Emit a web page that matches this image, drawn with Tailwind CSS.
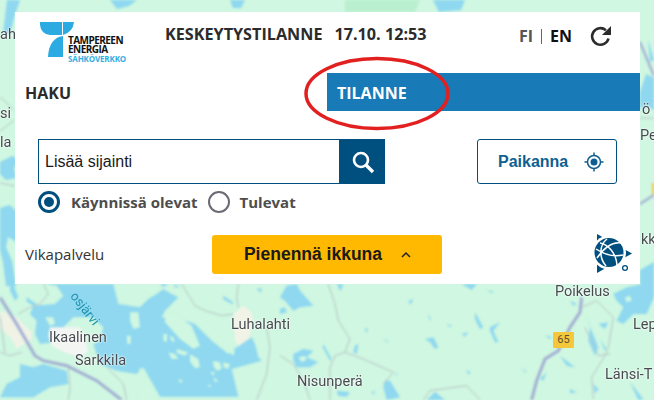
<!DOCTYPE html>
<html><head><meta charset="utf-8"><script src="https://cdn.jsdelivr.net/npm/@tailwindcss/browser@4"></script></head>
<body class="m-0">
<div class="relative w-[654px] h-[400px] overflow-hidden bg-[#cff7e1]">
<!-- map -->
<svg class="absolute inset-0 blur-[1px]" width="654" height="400" viewBox="0 0 654 400" fill="none">
<path d="M345 0h75l-5 12h-70z" fill="#b9efcf"/>
<g fill="#8fd8f0">
<path d="M7 0h13l-6 18-4 16H3z"/>
<path d="M110 0h27l-8 6-12 3z"/><path d="M230 0h15l-4 8h-8z"/><path d="M433 0h32l-4 10-22 2z"/>
<path d="M0 162l12-6 8 4-6 8 2 10-10 2-6-6z"/><path d="M0 208l10-3 8 8v30l-10-6-2 10 6 14 4 25H6l-3-24-3-12z"/>
<path d="M640 92l6-18 8 4v32l-8-4-2 6-4-6z"/><path d="M640 270l14-8v22h-14z"/><path d="M648 40l6 20-4 2z"/>
</g>
<rect x="652" y="183" width="2" height="14" fill="#f5c83c"/>
<path d="M640 42l14 34" stroke="#a9b4d4" stroke-width="2.500"/>
<path d="M640 204l14-9" stroke="#a9b4d4" stroke-width="2.500"/>
<path d="M640 118h14" stroke="#b8c4c6" stroke-width="1"/>
<path d="M0 97l6 5 7 8M0 131l8-6 6-5M0 183l15 3" stroke="#b8c4c6" stroke-width="1"/>

<g transform="translate(0 284) scale(.33333)">
  <path d="M0 80l50 20 45 45v20l-45 30-15-30-35-35z" fill="#f0f2e6"/>
  <path d="M700 90l30-25 25 20 5 25-15 60-25 20-15-20z" fill="#f1f3e6"/>
  <path fill="#8fd8f0" d="M135 0H340l15 60 35 5 30 5 25-25 25-15 20-15 25 15 20 10-40 40-10 20 70 10 30 10 50 50 50 40 10-10 60-40 10 20 10 40 10 10-90 25 20 83H480l-50-88-20 20-60-10-50-20-20-60-80-10-80 10-15-30 5-40-20-20 10-25 65-5 25-25-20-30z"/>
  <path fill="#8fd8f0" d="M60 240l40 10 30-10 70 20 5 40-55 10-50 30H0l20-40 40-20z"/>
  <path fill="#8fd8f0" d="M30 0h10l15 40-10 10-15-30zM80 40l30 20-5 8-25-15zM670 35l30 20-3 6-27-15zM770 15l14-3v14zM480 0h25l-15 10zM520 0l20 10h-15z"/>
  <g fill="#cff7e1">
    <path d="M220 100l60 0 30 30-10 40-40 20-60-10-50-30 40-20z"/>
    <path d="M390 85h25l5 45-20 5-10-25z"/>
    <path d="M495 95l30-5 50 35 25 60-20 10-40-30-45-50z"/>
    <path d="M490 150h12l-2 25-10-5zM510 155l10 5 5 15-12-5zM380 155l12 0v25h-10zM505 205l20 5 10 15-20 0zM530 195l35 10-10 10-25-8zM570 210l25 15 5 25-15 3-15-20zM640 230l20 5 5 20-15 5-10-15zM670 235l20 5-5 15-15-5zM630 265l15 0-5 10zM640 280l15 10-10 5zM535 285l15 5-10 8zM620 300l15 5-5 5z"/>
    <path d="M135 100l25 0 5 20-15 5zM60 110l30 15-5 10zM690 190l15 10-5 15-12-10z"/>
    <path d="M420 250l60 98h-60l-15-40z"/>
    <path d="M120 340l40-10 10 18h-50z"/>
  </g>
  <path d="M150 130h90l15 30 10 40-20 20-40-10-50-25-10-30z" fill="#f3f5f2"/>
  <g stroke="#b8c4c6" stroke-width="3" fill="none">
    <path d="M130 0l15 30-25 30-30 10-35 20M0 205l30 10 35-10M545 0l40 65 30 15 50 15 35-5M715 0l-5 40 5 30M0 95l15 110M205 250l5 60-5 38M320 250l50 50 10 48M800 130l10 60-10 80-30 78"/>
  </g>
  <path d="M0 40l50 80 55 95 25 15 70 15 90 45 75 58" stroke="#a3aed3" stroke-width="9" fill="none"/>
</g>

<g transform="translate(280 284) scale(.33333)">
  <g fill="#8fd8f0">
    <path d="M0 40L20 5l30-5 10 20 40 45-40 5-20 10-25-30zM0 75l15-5 5 15-20 5zM170 0h20l-8 22zM545 0h45l-15 18zM620 18l20 5-4 5zM385 52l15-8-8 18zM445 90l8 15-4 4zM585 85l25 45-10 5-15-30zM630 130l30-15-20 25 15 35-10 0-15-35zM435 165l25-5 15 30-10 5-15-20zM545 150l20-5-10 13zM500 120l15 5-5 5zM225 185l10-5-5 30-10-5zM130 180l25 45-5 5-22-40zM310 165l15 8-5 2zM255 130l10 10-8 5zM315 290h15l30 50-40 8-10-38zM170 320l40 5-10 13-25-3zM275 325l12-5-8 12zM725 250l15 15-5 0zM560 258l12 7-7 7zM345 265l8 8-6 1zM440 348l25-25 30 25z"/>
    <path d="M40 210l30-15 30 5-20 20 35 15-25 15-40 0-10-20z"/>
    <path d="M1000 30l40-20 50-10h32v40l-22 50-40 0-30 30-20-10 20-40-20-20zM955 120l30-5-10 20zM915 90l40 100-10 25-20-45 5-40zM795 155l20 3-5 7zM840 215l45 35-25-5zM870 315l20 10-20 3zM940 300l15 15-10 15zM1050 295l40 50-15 3zM960 165l20 30-5 5zM780 285l20-20-10 25zM870 50l20 10-10 5z"/>
  </g>
  <path fill="#cff7e1" d="M55 220l20-5 5 12-15 8zM1035 40l15-5 5 15-15 5z"/>
  <g stroke="#b8c4c6" stroke-width="3" fill="none">
    <path d="M145 0l20 60 10 50 35 55-15 40-30 10-15 35v98M195 205l55 20 90 40-30 35M0 215l40 25 30 50 20 58M430 348l20-28 110-15 40 43M905 70l45-20 50 50-15 90-10 25-40 65 5 65M915 130l40 85 35-5"/>
  </g>
  <path d="M905 40l-5 45-30 45-35 70-40 25-25 65-15 58" stroke="#a3aed3" stroke-width="9" fill="none"/>
</g>
</svg>
<div class="absolute inset-0 blur-[0.4px] text-[#474b50] font-['Roboto',sans-serif] text-[14.5px] leading-none whitespace-nowrap [text-shadow:0_0_2px_#fff,0_0_2px_#fff]">
<span class="absolute left-[49px] top-[331px]">Ikaalinen</span>
<span class="absolute left-[75px] top-[354px]">Sarkkila</span>
<span class="absolute left-[231px] top-[318px]">Luhalahti</span>
<span class="absolute left-[297px] top-[375px]">Nisunperä</span>
<span class="absolute left-[555px] top-[285px]">Poikelus</span>
<span class="absolute left-[633px] top-[318px]">Lep</span>
<span class="absolute left-[605px] top-[368px]">Länsi-T</span>
<span class="absolute left-[0px] top-[28px]">ah</span>
<span class="absolute left-[0px] top-[107px]">si</span>
<span class="absolute left-[0px] top-[136px]">la</span>
<span class="absolute left-[642px] top-[103px]">ö</span>
<span class="absolute left-[640px] top-[129px]">Pei</span>
<span class="absolute left-[641px] top-[233px]">kk</span>
<span class="absolute left-[66px] top-[302px] rotate-[52deg] text-[#1f95ad] text-[13px] [text-shadow:none]">osjärvi</span>
<span class="absolute left-[553px] top-[332px] w-[21px] h-[16px] rounded-[1px] bg-[#f5c83c] text-[11px] leading-[16px] text-center text-[#5b5330] [text-shadow:none]">65</span>
</div>

<!-- panel -->
<div class="absolute left-[15px] top-[12px] w-[625px] h-[272px] bg-white flex flex-col font-['Open_Sans',sans-serif]">
  <header class="h-[60px] flex items-start shrink-0">
    <div class="w-[150px] pl-[25px] pt-[10px] shrink-0">
      <div class="relative w-[90px] h-[46px]">
        <svg class="absolute left-0 top-0" width="34" height="35" viewBox="0 0 34 35"><path d="M0 0h22v13H10Q1 12 0 3z M23 0h11q-1 10-11 13z M23 14v21H8q1-19 15-21z" fill="#2cabe2"/></svg>
        <div class="absolute left-[28px] top-[14px] text-[10px] leading-[8.500px] font-bold text-[#111] tracking-[-0.55px]">TAMPEREEN<br>ENERGIA</div>
        <div class="absolute left-[28px] top-[33px] text-[8px] leading-[8px] font-bold text-[#35aee2] tracking-[-0.15px]">SÄHKÖVERKKO</div>
      </div>
    </div>
    <div class="flex gap-[12px] pt-[12px] text-[16.2px] leading-[20px] font-bold text-[#2b2b2b] whitespace-nowrap">
      <span>KESKEYTYSTILANNE</span><span>17.10. 12:53</span>
    </div>
    <div class="ml-auto flex items-center pt-[12px] pr-[27px]">
      <div class="flex items-center text-[16px] leading-[20px] font-bold">
        <span class="text-[#555]">FI</span>
        <span class="w-px h-[15px] bg-[#666] mx-[8px]"></span>
        <span class="text-[#111]">EN</span>
      </div>
      <svg class="ml-[17px]" width="24" height="24" viewBox="0 0 24 24" fill="none"><path d="M19.5 14.5a8.3 8.3 0 1 1-2.6-8.3" stroke="#2b2b2b" stroke-width="2.6"/><path d="M22 2v9h-9z" fill="#2b2b2b"/></svg>
    </div>
  </header>
  <div class="h-[38px] mt-[1px] flex items-center shrink-0 text-[16px] font-bold">
    <div class="w-[312px] pl-[10px] pt-[2px] text-[#2b2b2b]">HAKU</div>
    <div class="flex-1 h-full bg-[#187ab6] text-white pl-[10px] pt-[2px] flex items-center">TILANNE</div>
  </div>
  <div class="flex items-start pl-[23px] pr-[23px] mt-[28px] shrink-0">
    <div>
      <div class="flex w-[347px] h-[45px]">
        <div class="flex-1 border border-[#00507f] flex items-center pl-[6px] font-['Liberation_Sans',sans-serif] text-[16px] text-[#1a1a1a]">Lisää sijainti</div>
        <div class="w-[45px] bg-[#00507f] flex items-center justify-center"><svg width="26" height="26" viewBox="0 0 26 26" fill="none"><circle cx="11" cy="11" r="7" stroke="#fff" stroke-width="2.6"/><path d="M16 16l7 7" stroke="#fff" stroke-width="3.4"/></svg></div>
      </div>
      <div class="flex items-center mt-[7px] h-[22px] text-[15px] font-bold text-[#4d4d4d]">
        <span class="w-[22px] h-[22px] rounded-full border-[3px] border-[#00507f] flex items-center justify-center"><span class="w-[10px] h-[10px] rounded-full bg-[#00507f]"></span></span>
        <span class="ml-[11px]">Käynnissä olevat</span>
        <span class="ml-[10px] w-[22px] h-[22px] rounded-full border-[2px] border-[#6b6b75]"></span>
        <span class="ml-[10px]">Tulevat</span>
      </div>
    </div>
    <div class="ml-auto w-[140px] h-[45px] border border-[#00507f] rounded-[3px] flex items-center pl-[20px] font-['Liberation_Sans',sans-serif] text-[16px] font-bold text-[#0e5f92]">
      <span>Paikanna</span>
      <svg class="ml-[16px]" width="20" height="20" viewBox="0 0 20 20" fill="none"><circle cx="10" cy="10" r="6.5" stroke="#0e5f92" stroke-width="1.5"/><circle cx="10" cy="10" r="3.5" fill="#0e5f92"/><path d="M10 0.5v3M10 16.5v3M.5 10h3M16.5 10h3" stroke="#0e5f92" stroke-width="1.5"/></svg>
    </div>
  </div>
  <div class="flex items-center mt-[22px] h-[39px] pl-[10px]">
    <span class="w-[187px] text-[15px] text-[#333]">Vikapalvelu</span>
    <div class="w-[230px] h-[39px] bg-[#ffb900] rounded-[3px] flex items-center justify-center font-['Liberation_Sans',sans-serif] text-[17.5px] font-bold text-[#1a1a1a]">
      <span class="ml-[1px]">Pienennä ikkuna</span>
      <svg class="ml-[19px]" width="10" height="7" viewBox="0 0 10 7" fill="none"><path d="M1 6l4-4 4 4" stroke="#222" stroke-width="1.5"/></svg>
    </div>
    <svg class="ml-auto" width="46" height="42" viewBox="0 0 46 42" fill="none">
      <path d="M3 0L38 19.500 3 39z" fill="#00507f"/>
      <circle cx="15" cy="18.500" r="17" fill="#fff"/>
      <circle cx="15" cy="18.500" r="14.500" fill="#00507f"/>
      <path d="M3 24C9 15 18 7 28 9M6 9c7 1 16 9 17 22M13 5C5 11 5 24 12 32M2 15c9 6 18 8 27 6" stroke="#fff" stroke-width="1.5"/>
      <circle cx="31" cy="34" r="2.400" stroke="#00507f" stroke-width="1.300"/>
    </svg>
  </div>
</div>
<!-- red annotation ellipse -->
<svg class="absolute left-[300px] top-[55px]" width="152" height="80" viewBox="0 0 152 80" fill="none"><ellipse cx="77" cy="38.500" rx="71" ry="35" stroke="#e32020" stroke-width="3.500"/></svg>
</div>
</body></html>
